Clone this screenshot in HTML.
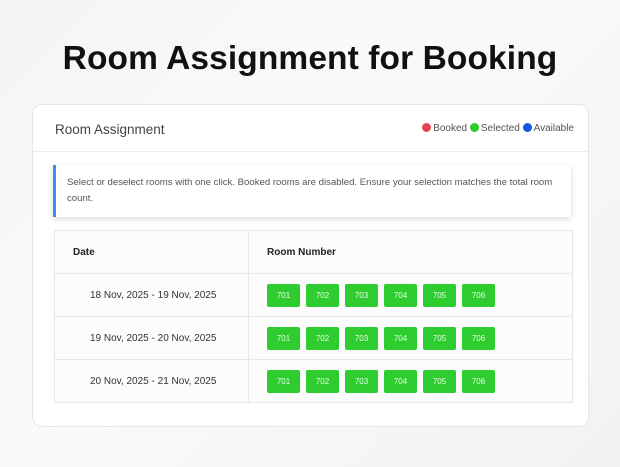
<!DOCTYPE html>
<html><head><style>
body{margin:0;width:620px;height:467px;overflow:hidden;background:linear-gradient(135deg,#f4f4f4 0%,#fafafa 40%,#f2f2f2 100%);font-family:"Liberation Sans",sans-serif;position:relative}
h1{position:absolute;top:40px;left:0;width:620px;text-align:center;margin:0;font-size:33.5px;font-weight:bold;color:#111;letter-spacing:0.1px}
.card{position:absolute;left:32px;top:104px;width:555px;height:321px;background:#fff;border:1px solid #e6e6e6;border-radius:10px}
.hd{height:46px;border-bottom:1px solid #ececec;position:relative}
.hd .t{position:absolute;left:22px;top:17px;font-size:13.5px;color:#444}
.lg{position:absolute;right:14px;top:18px;font-size:10px;color:#555}
.dot{display:inline-block;width:9px;height:9px;border-radius:50%;vertical-align:-1px;margin-right:2px}
.info{position:absolute;left:20px;top:60px;width:518px;height:52px;border-left:3px solid #3b8ff0;background:#fff;box-shadow:0 2px 6px rgba(0,0,0,.15);font-size:9.6px;color:#555;line-height:16px;box-sizing:border-box;padding:10px 10px 0 11px}
table{position:absolute;left:21px;top:125px;width:519px;border-collapse:collapse;background:#fcfcfd}
td,th{border:1px solid #e6e8ee;font-size:10px;color:#333;padding:0}
th{height:42px;text-align:left;font-weight:bold;color:#222}
td{height:42px}
.b{display:inline-block;width:33px;height:23px;background:#2ecc2e;color:#e8ffe8;font-size:8px;text-align:center;line-height:23px;border-radius:2px;margin-right:6px;vertical-align:middle}
</style></head><body>
<h1>Room Assignment for Booking</h1>
<div class="card">
<div class="hd"><span class="t">Room Assignment</span>
<span class="lg"><span class="dot" style="background:#e84352"></span>Booked <span class="dot" style="background:#2ecc2e"></span>Selected <span class="dot" style="background:#1656e0"></span>Available</span></div>
<div class="info">Select or deselect rooms with one click. Booked rooms are disabled. Ensure your selection matches the total room count.</div>
<table>
<tr><th style="width:175px;padding-left:18px">Date</th><th style="padding-left:18px">Room Number</th></tr>
<tr><td style="padding-left:35px">18 Nov, 2025 - 19 Nov, 2025</td><td style="padding-left:18px"><span class="b">701</span><span class="b">702</span><span class="b">703</span><span class="b">704</span><span class="b">705</span><span class="b">706</span></td></tr>
<tr><td style="padding-left:35px">19 Nov, 2025 - 20 Nov, 2025</td><td style="padding-left:18px"><span class="b">701</span><span class="b">702</span><span class="b">703</span><span class="b">704</span><span class="b">705</span><span class="b">706</span></td></tr>
<tr><td style="padding-left:35px">20 Nov, 2025 - 21 Nov, 2025</td><td style="padding-left:18px"><span class="b">701</span><span class="b">702</span><span class="b">703</span><span class="b">704</span><span class="b">705</span><span class="b">706</span></td></tr>
</table>
</div>
</body></html>
